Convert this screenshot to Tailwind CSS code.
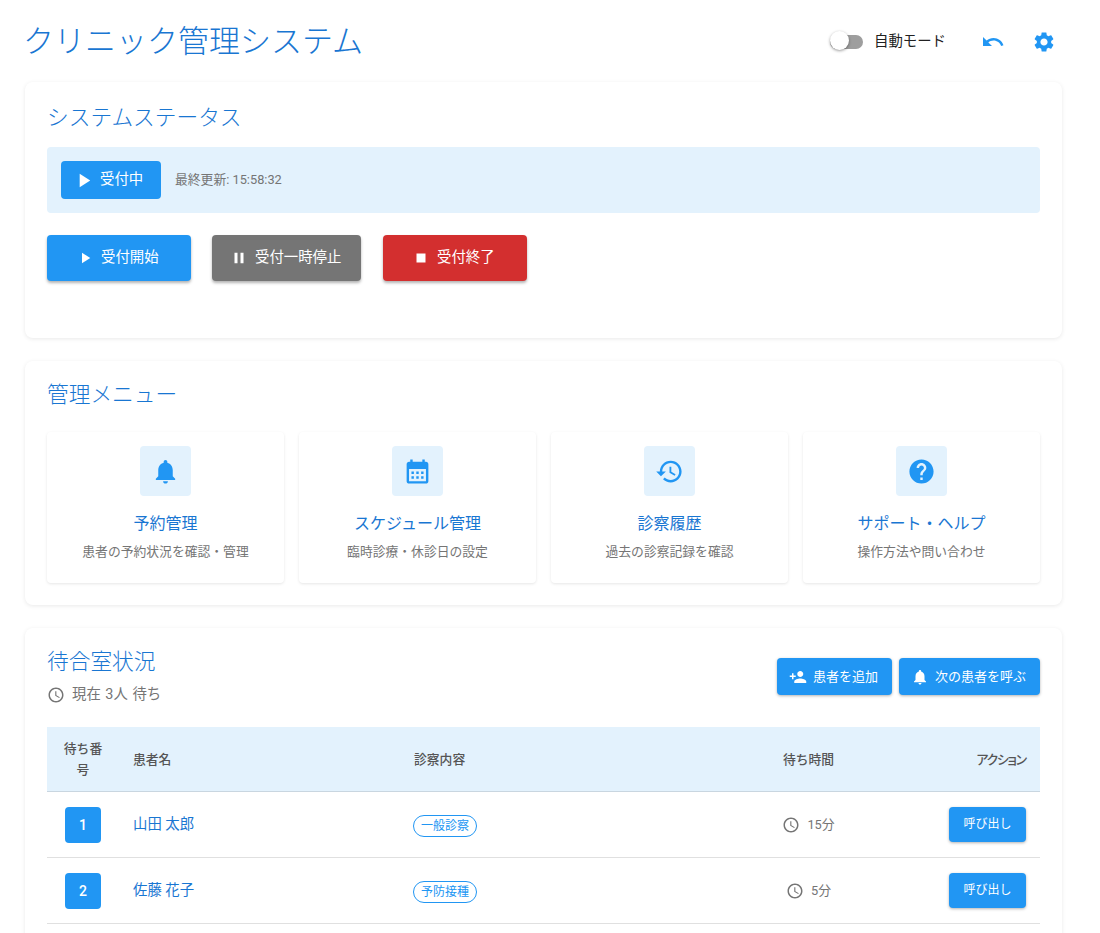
<!DOCTYPE html>
<html lang="ja">
<head>
    <meta charset="UTF-8">
    <meta name="viewport" content="width=device-width, initial-scale=1.0">
    <title>クリニック管理システム</title>
    <script src="https://cdn.jsdelivr.net/npm/@tailwindcss/browser@4"></script>
</head>
<body class="h-[933px] overflow-hidden bg-white [font-family:Roboto,'Noto_Sans_CJK_JP',sans-serif]">
    <div class="pl-[25px] pr-[38px]">
        <!-- Header -->
        <header class="flex h-[82px] items-center justify-between pt-[2px]">
            <h1 class="-ml-[2px] text-[31px] leading-[40px] font-light text-[#1976d2]">クリニック管理システム</h1>
            <div class="flex items-center pr-[6px]">
                <div class="relative h-[14px] w-[33px] rounded-full bg-[#9e9e9e]">
                    <span class="absolute top-[-4px] left-0 size-[19px] rounded-full bg-white shadow-[0_1px_3px_rgba(0,0,0,0.4)]"></span>
                </div>
                <span class="ml-[11px] text-[14.4px] text-[#212121]">自動モード</span>
                <svg class="ml-[35px] size-6 fill-[#2196f3]" viewBox="0 0 24 24"><path d="M12.5 8c-2.65 0-5.05.99-6.9 2.6L2 7v9h9l-3.62-3.62c1.39-1.16 3.16-1.88 5.12-1.88 3.54 0 6.55 2.31 7.6 5.5l2.37-.78C21.08 11.03 17.15 8 12.5 8z"/></svg>
                <svg class="ml-[27px] size-6 fill-[#2196f3]" viewBox="0 0 24 24"><path d="M19.14,12.94c0.04-0.3,0.06-0.61,0.06-0.94c0-0.32-0.02-0.64-0.07-0.94l2.03-1.58c0.18-0.14,0.23-0.41,0.12-0.61 l-1.92-3.32c-0.12-0.22-0.37-0.29-0.59-0.22l-2.39,0.96c-0.5-0.38-1.03-0.7-1.62-0.94L14.4,2.81c-0.04-0.24-0.24-0.41-0.48-0.41 h-3.84c-0.24,0-0.43,0.17-0.47,0.41L9.25,5.35C8.66,5.59,8.12,5.92,7.63,6.29L5.24,5.33c-0.22-0.08-0.47,0-0.59,0.22L2.74,8.87 C2.62,9.08,2.66,9.34,2.86,9.48l2.03,1.58C4.84,11.36,4.8,11.69,4.8,12s0.02,0.64,0.07,0.94l-2.03,1.58 c-0.18,0.14-0.23,0.41-0.12,0.61l1.92,3.32c0.12,0.22,0.37,0.29,0.59,0.22l2.39-0.96c0.5,0.38,1.03,0.7,1.62,0.94l0.36,2.54 c0.05,0.24,0.24,0.41,0.48,0.41h3.84c0.24,0,0.44-0.17,0.47-0.41l0.36-2.54c0.59-0.24,1.13-0.56,1.62-0.94l2.39,0.96 c0.22,0.08,0.47,0,0.59-0.22l1.92-3.32c0.12-0.22,0.07-0.47-0.12-0.61L19.14,12.94z M12,15.6c-1.98,0-3.6-1.62-3.6-3.6 s1.62-3.6,3.6-3.6s3.6,1.62,3.6,3.6S13.98,15.6,12,15.6z"/></svg>
            </div>
        </header>

        <!-- System status -->
        <section class="h-[256px] rounded-lg bg-white px-[22px] pt-[21px] shadow-[0_1px_4px_rgba(0,0,0,0.09)]">
            <h2 class="text-[21.7px] leading-[30px] font-light text-[#1976d2]">システムステータス</h2>
            <div class="mt-[14px] flex h-[66px] items-center rounded bg-[#e3f2fd] pl-[14px]">
                <div class="flex h-[38px] w-[100px] items-center gap-[5px] rounded bg-[#2196f3] pl-[11px] text-[14.4px] text-white">
                    <svg class="size-[23px] fill-white" viewBox="0 0 24 24"><path d="M8 5v14l11-7z"/></svg>
                    <span>受付中</span>
                </div>
                <span class="ml-[14px] text-[12.8px] text-[#757575]">最終更新: 15:58:32</span>
            </div>
            <div class="mt-[22px] flex gap-[21px]">
                <button class="flex h-[46px] w-[144px] items-center gap-[7px] rounded bg-[#2196f3] pl-[29px] text-[14.4px] text-white shadow-[0_2px_3px_rgba(0,0,0,0.3)]">
                    <svg class="size-[18px] fill-white" viewBox="0 0 24 24"><path d="M8 5v14l11-7z"/></svg>
                    受付開始
                </button>
                <button class="flex h-[46px] w-[149px] items-center gap-[7px] rounded bg-[#757575] pl-[18px] text-[14.4px] text-white shadow-[0_2px_3px_rgba(0,0,0,0.3)]">
                    <svg class="size-[18px] fill-white" viewBox="0 0 24 24"><path d="M6 19h4V5H6v14zm8-14v14h4V5h-4z"/></svg>
                    受付一時停止
                </button>
                <button class="ml-px flex h-[46px] w-[144px] items-center gap-[7px] rounded bg-[#d32f2f] pl-[29px] text-[14.4px] text-white shadow-[0_2px_3px_rgba(0,0,0,0.3)]">
                    <svg class="size-[18px] fill-white" viewBox="0 0 24 24"><path d="M6 6h12v12H6z"/></svg>
                    受付終了
                </button>
            </div>
        </section>

        <!-- Admin menu -->
        <section class="mt-[23px] rounded-lg bg-white px-[22px] pt-[19px] pb-[22px] shadow-[0_1px_4px_rgba(0,0,0,0.09)]">
            <h2 class="text-[21.7px] leading-[30px] font-light text-[#1976d2]">管理メニュー</h2>
            <div class="mt-[22px] grid grid-cols-4 gap-[15px]">
                <div class="flex h-[151px] flex-col items-center rounded bg-white pt-[14px] shadow-[0_1px_3px_rgba(0,0,0,0.1)]">
                    <div class="flex h-[50px] w-[51px] items-center justify-center rounded bg-[#e3f2fd]">
                        <svg class="size-[29px] fill-[#2196f3]" viewBox="0 0 24 24"><path d="M12 22c1.1 0 2-.9 2-2h-4c0 1.1.89 2 2 2zm6-6v-5c0-3.07-1.64-5.64-4.5-6.32V4c0-.83-.67-1.5-1.5-1.5s-1.5.67-1.5 1.5v.68C7.63 5.36 6 7.92 6 11v5l-2 2v1h16v-1l-2-2z"/></svg>
                    </div>
                    <h3 class="mt-[16px] text-[16px] leading-[24px] text-[#1976d2]">予約管理</h3>
                    <p class="mt-[6px] text-[12.8px] leading-[20px] text-[#757575]">患者の予約状況を確認・管理</p>
                </div>
                <div class="flex h-[151px] flex-col items-center rounded bg-white pt-[14px] shadow-[0_1px_3px_rgba(0,0,0,0.1)]">
                    <div class="flex h-[50px] w-[51px] items-center justify-center rounded bg-[#e3f2fd]">
                        <svg class="size-[29px] fill-[#2196f3]" viewBox="0 0 24 24"><path d="M19 4h-1V2h-2v2H8V2H6v2H5c-1.11 0-1.99.9-1.99 2L3 20c0 1.1.89 2 2 2h14c1.1 0 2-.9 2-2V6c0-1.1-.9-2-2-2zm0 16H5V10h14v10zM9 14H7v-2h2v2zm4 0h-2v-2h2v2zm4 0h-2v-2h2v2zm-8 4H7v-2h2v2zm4 0h-2v-2h2v2zm4 0h-2v-2h2v2z"/></svg>
                    </div>
                    <h3 class="mt-[16px] text-[16px] leading-[24px] text-[#1976d2]">スケジュール管理</h3>
                    <p class="mt-[6px] text-[12.8px] leading-[20px] text-[#757575]">臨時診療・休診日の設定</p>
                </div>
                <div class="flex h-[151px] flex-col items-center rounded bg-white pt-[14px] shadow-[0_1px_3px_rgba(0,0,0,0.1)]">
                    <div class="flex h-[50px] w-[51px] items-center justify-center rounded bg-[#e3f2fd]">
                        <svg class="size-[29px] fill-[#2196f3]" viewBox="0 0 24 24"><path d="M13 3c-4.97 0-9 4.03-9 9H1l3.89 3.89.07.14L9 12H6c0-3.87 3.13-7 7-7s7 3.13 7 7-3.13 7-7 7c-1.93 0-3.68-.79-4.94-2.06l-1.42 1.42C8.27 19.99 10.51 21 13 21c4.97 0 9-4.03 9-9s-4.03-9-9-9zm-1 5v5l4.28 2.54.72-1.21-3.5-2.08V8H12z"/></svg>
                    </div>
                    <h3 class="mt-[16px] text-[16px] leading-[24px] text-[#1976d2]">診察履歴</h3>
                    <p class="mt-[6px] text-[12.8px] leading-[20px] text-[#757575]">過去の診察記録を確認</p>
                </div>
                <div class="flex h-[151px] flex-col items-center rounded bg-white pt-[14px] shadow-[0_1px_3px_rgba(0,0,0,0.1)]">
                    <div class="flex h-[50px] w-[51px] items-center justify-center rounded bg-[#e3f2fd]">
                        <svg class="size-[29px] fill-[#2196f3]" viewBox="0 0 24 24"><path d="M12 2C6.48 2 2 6.48 2 12s4.48 10 10 10 10-4.48 10-10S17.52 2 12 2zm1 17h-2v-2h2v2zm2.07-7.75l-.9.92C13.45 12.9 13 13.5 13 15h-2v-.5c0-1.1.45-2.1 1.17-2.83l1.24-1.26c.37-.36.59-.86.59-1.41 0-1.1-.9-2-2-2s-2 .9-2 2H8c0-2.21 1.79-4 4-4s4 1.79 4 4c0 .88-.36 1.68-.93 2.25z"/></svg>
                    </div>
                    <h3 class="mt-[16px] text-[16px] leading-[24px] text-[#1976d2]">サポート・ヘルプ</h3>
                    <p class="mt-[6px] text-[12.8px] leading-[20px] text-[#757575]">操作方法や問い合わせ</p>
                </div>
            </div>
        </section>

        <!-- Waiting room -->
        <section class="mt-[23px] rounded-lg bg-white px-[22px] pt-[19px] pb-[22px] shadow-[0_1px_4px_rgba(0,0,0,0.09)]">
            <div class="flex items-start justify-between">
                <div>
                    <h2 class="text-[21.7px] leading-[30px] font-light text-[#1976d2]">待合室状況</h2>
                    <div class="mt-[8px] flex h-5 items-center gap-[7px] text-[14.4px] text-[#757575] [word-spacing:1px]">
                        <svg class="size-[18px] fill-[#757575]" viewBox="0 0 24 24"><path d="M11.99 2C6.47 2 2 6.48 2 12s4.47 10 9.99 10C17.52 22 22 17.52 22 12S17.52 2 11.99 2zM12 20c-4.42 0-8-3.58-8-8s3.58-8 8-8 8 3.58 8 8-3.58 8-8 8zm.5-13H11v6l5.25 3.15.75-1.23-4.5-2.67z"/></svg>
                        <span>現在 3人 待ち</span>
                    </div>
                </div>
                <div class="mt-[11px] flex gap-[7px]">
                    <button class="flex h-[37px] w-[115px] items-center justify-center gap-[6px] rounded bg-[#2196f3] pr-[2px] text-[13px] text-white shadow-[0_1px_3px_rgba(0,0,0,0.3)]">
                        <svg class="size-[18px] fill-white" viewBox="0 0 24 24"><path d="M15 12c2.21 0 4-1.79 4-4s-1.79-4-4-4-4 1.79-4 4 1.79 4 4 4zm-9-2V7H4v3H1v2h3v3h2v-3h3v-2H6zm9 4c-2.67 0-8 1.34-8 4v2h16v-2c0-2.66-5.33-4-8-4z"/></svg>
                        患者を追加
                    </button>
                    <button class="flex h-[37px] w-[141px] items-center justify-center gap-[6px] rounded bg-[#2196f3] pr-[2px] text-[13px] text-white shadow-[0_1px_3px_rgba(0,0,0,0.3)]">
                        <svg class="size-[18px] fill-white" viewBox="0 0 24 24"><path d="M12 22c1.1 0 2-.9 2-2h-4c0 1.1.89 2 2 2zm6-6v-5c0-3.07-1.64-5.64-4.5-6.32V4c0-.83-.67-1.5-1.5-1.5s-1.5.67-1.5 1.5v.68C7.63 5.36 6 7.92 6 11v5l-2 2v1h16v-1l-2-2z"/></svg>
                        次の患者を呼ぶ
                    </button>
                </div>
            </div>
            <table class="mt-[22px] w-full table-fixed">
                <colgroup>
                    <col class="w-[72px]">
                    <col class="w-[281px]">
                    <col>
                    <col class="w-[79px]">
                    <col class="w-[192px]">
                </colgroup>
                <thead class="bg-[#e3f2fd] text-[12.8px] leading-[21px] font-medium text-[#555]">
                    <tr class="h-[64px] border-b border-[#c9d6e0]">
                        <th class="px-[14px] text-center font-medium">待ち番号</th>
                        <th class="px-[14px] pt-[2px] text-left font-medium">患者名</th>
                        <th class="px-[14px] pt-[2px] text-left font-medium">診察内容</th>
                        <th class="pt-[2px] text-center font-medium">待ち時間</th>
                        <th class="px-[14px] pt-[2px] text-right font-medium tracking-[-1.2px] [font-feature-settings:'palt']">アクション</th>
                    </tr>
                </thead>
                <tbody>
                    <tr class="h-[66px] border-b border-[#e0e0e0]">
                        <td class="px-[18px] pt-[2px]"><div class="flex size-9 items-center justify-center rounded bg-[#2196f3] text-[14px] font-medium text-white">1</div></td>
                        <td class="px-[14px] pt-[2px] text-[14.4px] text-[#1976d2]">山田 太郎</td>
                        <td class="pt-[3px] pr-[14px] pl-[13px]"><span class="block h-[22px] w-fit rounded-full border border-[#2196f3] px-[7px] text-[12px] leading-[20px] text-[#2196f3]">一般診察</span></td>
                        <td class="pt-[2px]"><div class="flex items-center justify-center gap-[7px] text-[12.8px] text-[#757575]"><svg class="size-[18px] fill-[#757575]" viewBox="0 0 24 24"><path d="M11.99 2C6.47 2 2 6.48 2 12s4.47 10 9.99 10C17.52 22 22 17.52 22 12S17.52 2 11.99 2zM12 20c-4.42 0-8-3.58-8-8s3.58-8 8-8 8 3.58 8 8-3.58 8-8 8zm.5-13H11v6l5.25 3.15.75-1.23-4.5-2.67z"/></svg>15分</div></td>
                        <td class="px-[14px] text-right"><button class="h-[35px] w-[77px] rounded bg-[#2196f3] text-[12px] text-white shadow-[0_1px_3px_rgba(0,0,0,0.3)]">呼び出し</button></td>
                    </tr>
                    <tr class="h-[66px] border-b border-[#e0e0e0]">
                        <td class="px-[18px] pt-[2px]"><div class="flex size-9 items-center justify-center rounded bg-[#2196f3] text-[14px] font-medium text-white">2</div></td>
                        <td class="px-[14px] pt-[2px] text-[14.4px] text-[#1976d2]">佐藤 花子</td>
                        <td class="pt-[3px] pr-[14px] pl-[13px]"><span class="block h-[22px] w-fit rounded-full border border-[#2196f3] px-[7px] text-[12px] leading-[20px] text-[#2196f3]">予防接種</span></td>
                        <td class="pt-[2px]"><div class="flex items-center justify-center gap-[7px] text-[12.8px] text-[#757575]"><svg class="size-[18px] fill-[#757575]" viewBox="0 0 24 24"><path d="M11.99 2C6.47 2 2 6.48 2 12s4.47 10 9.99 10C17.52 22 22 17.52 22 12S17.52 2 11.99 2zM12 20c-4.42 0-8-3.58-8-8s3.58-8 8-8 8 3.58 8 8-3.58 8-8 8zm.5-13H11v6l5.25 3.15.75-1.23-4.5-2.67z"/></svg>5分</div></td>
                        <td class="px-[14px] text-right"><button class="h-[35px] w-[77px] rounded bg-[#2196f3] text-[12px] text-white shadow-[0_1px_3px_rgba(0,0,0,0.3)]">呼び出し</button></td>
                    </tr>
                </tbody>
            </table>
        </section>
    </div>
</body>
</html>
